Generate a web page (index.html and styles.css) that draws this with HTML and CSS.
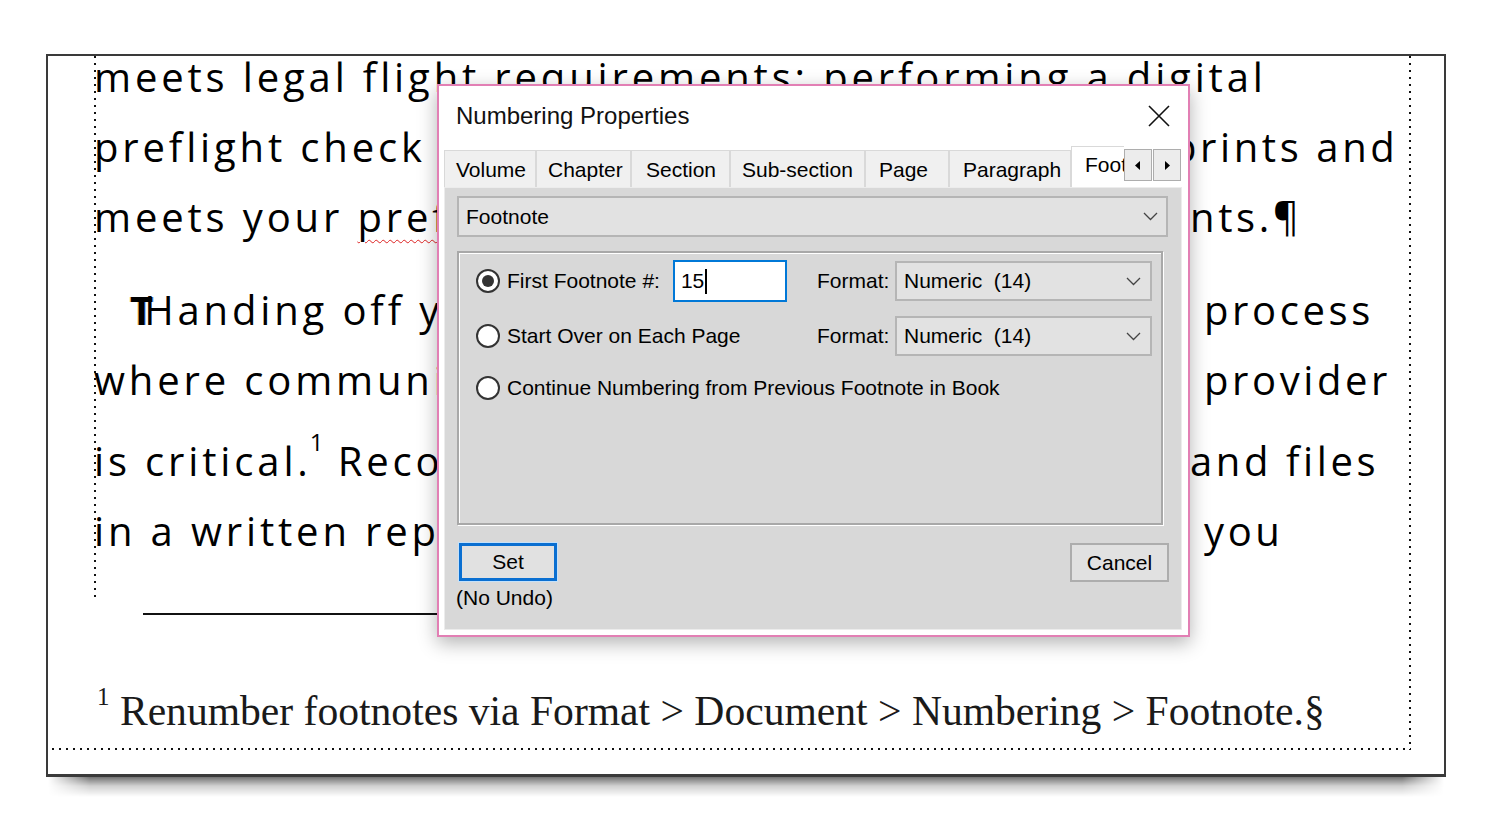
FILE: index.html
```html
<!DOCTYPE html>
<html lang="en">
<head>
    <meta charset="UTF-8">
    <meta name="viewport" content="width=device-width, initial-scale=1.0">
    <title>Numbering Properties</title>
    <link rel="stylesheet" href="styles.css">
</head>
<body>

    <div class="window">
        <div class="sheet">
            <div class="body-text">
                <div class="para">
                    <div class="line full">meets legal flight requirements: performing a digital</div>
                    <div class="line">
                        <span class="l">preflight check that confirms your document</span>
                        <span class="r cut">prints and</span>
                    </div>
                    <div class="line">
                        <span class="l">meets your <span class="misspelled">preflight</span> output requireme</span>
                        <span class="r">nts.¶</span>
                    </div>
                </div>
                <div class="para second">
                    <div class="line">
                        <span class="l indent"><span class="t-mark">T</span>Handing off your files to a print service is a</span>
                        <span class="r"> process</span>
                    </div>
                    <div class="line">
                        <span class="l">where communication with your print service</span>
                        <span class="r"> provider</span>
                    </div>
                    <div class="line tall">
                        <span class="l">is critical.<sup class="ref">1</sup> Record your print settings</span>
                        <span class="r">and files</span>
                    </div>
                    <div class="line">
                        <span class="l">in a written report for the provider so that</span>
                        <span class="r"> you</span>
                    </div>
                </div>
            </div>
            <div class="note-rule"></div>
            <p class="footnote"><sup class="note-num">1</sup> Renumber footnotes via Format &gt; Document &gt; Numbering &gt; Footnote.§</p>
        </div>

        <div class="dialog">
            <div class="title-bar">
                <span class="title">Numbering Properties</span>
                <svg class="close" width="22" height="22" viewBox="0 0 22 22">
                    <path d="M1 1 L21 21 M21 1 L1 21" stroke="#111" stroke-width="1.6" fill="none"/>
                </svg>
            </div>

            <div class="tab-strip">
                <div class="tabs">
                    <div class="tab">Volume</div>
                    <div class="tab">Chapter</div>
                    <div class="tab">Section</div>
                    <div class="tab">Sub-section</div>
                    <div class="tab">Page</div>
                    <div class="tab">Paragraph</div>
                    <div class="tab active">Footnote</div>
                </div>
                <div class="tab-scroll">
                    <span><svg width="6" height="9" viewBox="0 0 6 9"><path d="M5 0 L0 4.5 L5 9 Z" fill="#000"/></svg></span>
                    <span><svg width="6" height="9" viewBox="0 0 6 9"><path d="M1 0 L6 4.5 L1 9 Z" fill="#000"/></svg></span>
                </div>
            </div>

            <div class="tab-page">
                <div class="select main">
                    <span>Footnote</span>
                    <svg width="15" height="9" viewBox="0 0 15 9"><path d="M1 1 L7.5 7.5 L14 1" stroke="#444" stroke-width="1.3" fill="none"/></svg>
                </div>

                <div class="group">
                    <div class="opt">
                        <span class="radio on"></span>
                        <span>First Footnote #:</span>
                        <div class="num-input">15<span class="caret"></span></div>
                    </div>
                    <span class="fmt-label">Format:</span>
                    <div class="select fmt">
                        <span>Numeric  (14)</span>
                        <svg width="15" height="9" viewBox="0 0 15 9"><path d="M1 1 L7.5 7.5 L14 1" stroke="#444" stroke-width="1.3" fill="none"/></svg>
                    </div>

                    <div class="opt">
                        <span class="radio"></span>
                        <span>Start Over on Each Page</span>
                    </div>
                    <span class="fmt-label">Format:</span>
                    <div class="select fmt">
                        <span>Numeric  (14)</span>
                        <svg width="15" height="9" viewBox="0 0 15 9"><path d="M1 1 L7.5 7.5 L14 1" stroke="#444" stroke-width="1.3" fill="none"/></svg>
                    </div>

                    <div class="opt wide">
                        <span class="radio"></span>
                        <span>Continue Numbering from Previous Footnote in Book</span>
                    </div>
                </div>

                <div class="actions">
                    <div class="set-col">
                        <button class="btn primary">Set</button>
                        <span class="no-undo">(No Undo)</span>
                    </div>
                    <button class="btn">Cancel</button>
                </div>
            </div>
        </div>
    </div>
    <div class="window-shadow"></div>

</body>
</html>
```

FILE: styles.css
```css
body {
    margin: 0;
    background-color: #fff;
    font-family: 'Open Sans', sans-serif;
    color: #000;
}

/* document window */
.window {
    position: relative;
    width: 1400px;
    height: 723px;
    margin: 54px 0 0 46px;
    box-sizing: border-box;
    border: 2px solid #3a3a3a;
    border-bottom-width: 3px;
    background-color: #fff;
    overflow: hidden;
}

/* soft shadow strip under the window */
.window-shadow {
    width: 1396px;
    height: 20px;
    margin-left: 48px;
    background: linear-gradient(to bottom, rgba(0, 0, 0, 0.55), rgba(0, 0, 0, 0.18) 45%, rgba(0, 0, 0, 0));
    -webkit-mask-image: linear-gradient(to right, transparent, #000 3%, #000 97%, transparent);
    mask-image: linear-gradient(to right, transparent, #000 3%, #000 97%, transparent);
}

.sheet {
    display: flex;
    flex-direction: column;
    width: 1359px;
    height: 694px;
    margin-left: 4px;
    background:
        repeating-linear-gradient(to bottom, #111 0 2px, transparent 2px 7px) right top / 2px 100% no-repeat,
        repeating-linear-gradient(to right, #111 0 2px, transparent 2px 7px) left bottom / 100% 2px no-repeat;
}

.body-text {
    margin: -14px 0 0 42px;
    padding-bottom: 34px;
    font-size: 40px;
    letter-spacing: 3.85px;
    background: repeating-linear-gradient(to bottom, #111 0 2px, transparent 2px 7px) left top / 2px 100% no-repeat;
}

.para.second {
    margin-top: 23px;
}

.line {
    display: grid;
    grid-template-columns: 1fr 221px;
    height: 70px;
    line-height: 70px;
    white-space: nowrap;
}

.line.full {
    display: block;
}

.line.tall {
    height: 81px;
    align-items: end;
}

.l {
    overflow: hidden;
}

.l.indent {
    padding-left: 36px;
}

.r {
    white-space: pre;
    letter-spacing: 3.6px;
}

.r.cut {
    text-indent: -18px;
}

.t-mark {
    font-weight: 700;
    margin-right: -9px;
    letter-spacing: 0;
    text-shadow: -1px 0 rgba(230, 140, 0, 0.45), 1px 0 rgba(0, 80, 230, 0.45);
}

.misspelled {
    text-decoration: underline wavy #d22;
    text-decoration-thickness: 1px;
    text-underline-offset: 7px;
}

sup.ref {
    font-size: 24px;
    line-height: 0;
    vertical-align: 25px;
    letter-spacing: 0;
    margin-left: -2px;
}

/* footnote area */
.note-rule {
    width: 360px;
    height: 2px;
    margin: 13px 0 0 91px;
    background-color: #111;
}

.footnote {
    margin: 71px 0 0 45px;
    font-family: 'Liberation Serif', serif;
    font-size: 41.6px;
    line-height: 50px;
    color: #1a1a1a;
    white-space: nowrap;
}

.note-num {
    font-size: 25px;
    line-height: 0;
    vertical-align: 20px;
}

/* Numbering Properties dialog */
.dialog {
    position: absolute;
    left: 389px;
    top: 28px;
    width: 753px;
    height: 553px;
    box-sizing: border-box;
    padding: 0 6px 5px 5px;
    display: flex;
    flex-direction: column;
    border: 2px solid #e27fb4;
    background-color: #fff;
    font-family: 'Liberation Sans', Arial, sans-serif;
    font-size: 21px;
    color: #000;
    box-shadow: 0 6px 18px rgba(0, 0, 0, 0.3);
}

.title-bar {
    height: 60px;
    display: flex;
    align-items: center;
    justify-content: space-between;
    padding: 0 12px 0 12px;
}

.title {
    font-size: 24px;
    color: #111;
}

.tab-strip {
    height: 41px;
    display: flex;
}

.tabs {
    flex: 1;
    display: flex;
    align-items: flex-end;
    overflow: hidden;
}

.tab {
    flex: none;
    height: 37px;
    box-sizing: border-box;
    padding-left: 11px;
    border: 1px solid #d9d9d9;
    border-bottom: none;
    background-color: #f0f0f0;
    line-height: 38px;
    white-space: nowrap;
}

.tab:nth-child(1) { width: 92px; }
.tab:nth-child(2) { width: 95px; }
.tab:nth-child(3) { width: 99px; padding-left: 14px; }
.tab:nth-child(4) { width: 135px; }
.tab:nth-child(5) { width: 84px; padding-left: 13px; }
.tab:nth-child(6) { width: 122px; padding-left: 13px; }

.tab.active {
    position: relative;
    z-index: 1;
    height: 42px;
    margin-bottom: -1px;
    padding: 0 13px;
    background-color: #fff;
    line-height: 36px;
}

.tab-scroll {
    display: flex;
    gap: 1px;
    margin: 3px 1px 0 0;
}

.tab-scroll span {
    width: 28px;
    height: 32px;
    box-sizing: border-box;
    display: flex;
    align-items: center;
    justify-content: center;
    border: 1px solid #adadad;
    background-color: #ececec;
}

.tab-page {
    flex: 1;
    padding: 8px 13px 0 12px;
    border: 1px solid #ececec;
    background-color: #d8d8d8;
}

.select {
    display: flex;
    align-items: center;
    justify-content: space-between;
    box-sizing: border-box;
    border: 2px solid #b5b5b5;
    background-color: #e2e2e2;
    white-space: pre;
}

.select.main {
    height: 41px;
    padding: 0 8px 0 7px;
}

.select.fmt {
    height: 40px;
    padding: 0 9px 0 7px;
}

.group {
    height: 274px;
    box-sizing: border-box;
    margin: 14px 5px 0 0;
    padding: 7px 9px 0 17px;
    display: grid;
    grid-template-columns: 341px 78px 257px;
    grid-template-rows: 42px 42px 36px;
    row-gap: 13px;
    align-items: center;
    border: 2px solid #a8a8a8;
    box-shadow: inset 1px 1px 0 #fff, 1px 1px 0 #fff;
}

.opt {
    display: flex;
    align-items: center;
    gap: 7px;
    white-space: nowrap;
}

.opt.wide {
    grid-column: 1 / -1;
}

.radio {
    width: 24px;
    height: 24px;
    box-sizing: border-box;
    display: flex;
    align-items: center;
    justify-content: center;
    border: 2px solid #333;
    border-radius: 50%;
    background-color: #fff;
}

.radio.on::after {
    content: '';
    width: 12px;
    height: 12px;
    border-radius: 50%;
    background-color: #333;
}

.num-input {
    width: 114px;
    height: 42px;
    box-sizing: border-box;
    margin-left: 6px;
    padding-left: 6px;
    display: flex;
    align-items: center;
    border: 2px solid #0078d7;
    background-color: #fff;
}

.caret {
    width: 2px;
    height: 25px;
    margin-left: 1px;
    background-color: #000;
}

.fmt-label {
    white-space: nowrap;
}

.actions {
    display: flex;
    justify-content: space-between;
    align-items: flex-start;
    margin: 18px -1px 0 2px;
}

.set-col {
    display: flex;
    flex-direction: column;
    align-items: flex-start;
}

.btn {
    width: 99px;
    height: 39px;
    box-sizing: border-box;
    padding: 0;
    border: 2px solid #adadad;
    background-color: #e1e1e1;
    font: inherit;
    color: #000;
}

.btn.primary {
    width: 98px;
    height: 38px;
    border: 3px solid #0a6fd1;
    box-shadow: 0 0 0 1px #c4e1fa;
}

.no-undo {
    margin: 5px 0 0 -3px;
    line-height: 24px;
}
```
